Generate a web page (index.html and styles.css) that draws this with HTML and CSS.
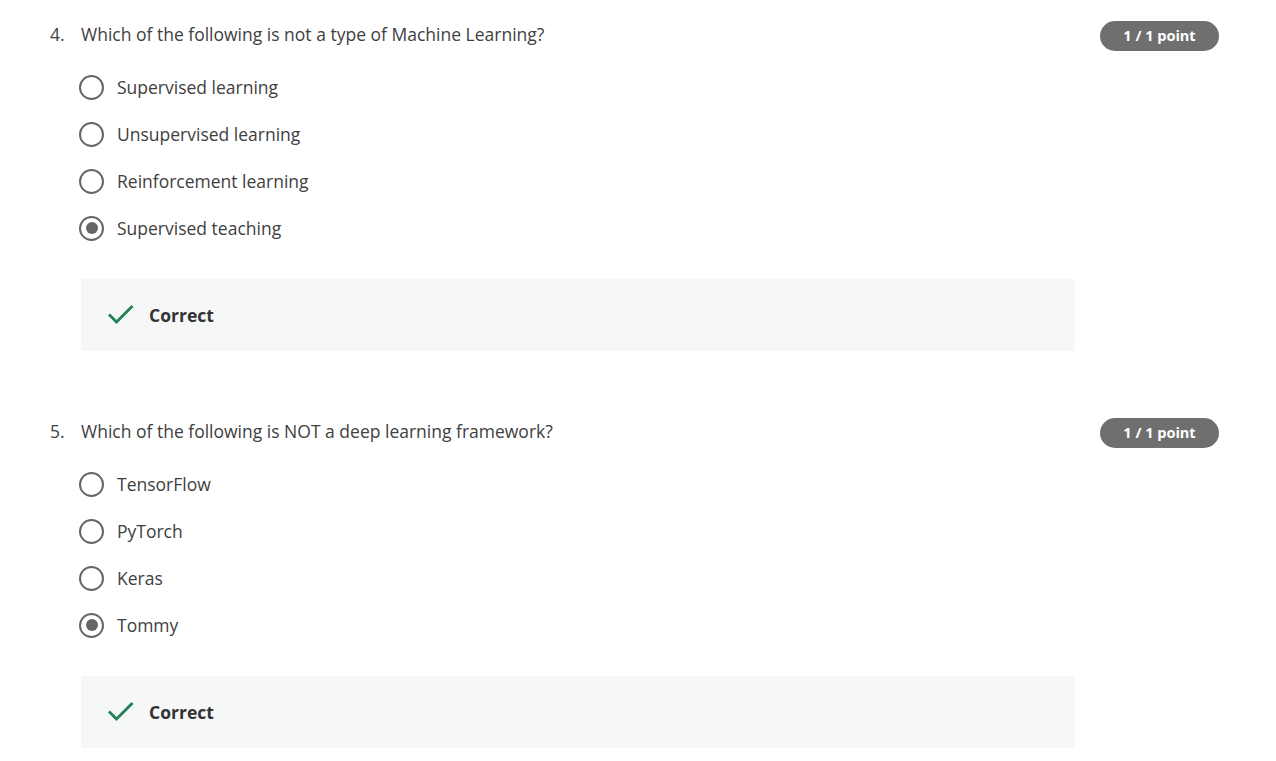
FILE: index.html
```html
<!DOCTYPE html>
<html>
<head>
<meta charset="utf-8">
<link rel="stylesheet" href="styles.css">
</head>
<body>
<div class="page">
  <section class="question">
    <div class="q-head">
      <span class="q-num">4.</span>
      <span class="q-text">Which of the following is not a type of Machine Learning?</span>
      <span class="badge">1 / 1 point</span>
    </div>
    <ul class="options">
      <li class="option"><span class="radio"></span><span>Supervised learning</span></li>
      <li class="option"><span class="radio"></span><span>Unsupervised learning</span></li>
      <li class="option"><span class="radio"></span><span>Reinforcement learning</span></li>
      <li class="option"><span class="radio checked"></span><span>Supervised teaching</span></li>
    </ul>
    <div class="feedback">
      <svg class="check" width="28" height="24" viewBox="0 0 28 24"><path d="M2 12.5 L9.5 20 L25.5 4" fill="none" stroke="#1f8354" stroke-width="2.8"/></svg>
      <span class="fb-text">Correct</span>
    </div>
  </section>
  <section class="question">
    <div class="q-head">
      <span class="q-num">5.</span>
      <span class="q-text">Which of the following is NOT a deep learning framework?</span>
      <span class="badge">1 / 1 point</span>
    </div>
    <ul class="options">
      <li class="option"><span class="radio"></span><span>TensorFlow</span></li>
      <li class="option"><span class="radio"></span><span>PyTorch</span></li>
      <li class="option"><span class="radio"></span><span>Keras</span></li>
      <li class="option"><span class="radio checked"></span><span>Tommy</span></li>
    </ul>
    <div class="feedback">
      <svg class="check" width="28" height="24" viewBox="0 0 28 24"><path d="M2 12.5 L9.5 20 L25.5 4" fill="none" stroke="#1f8354" stroke-width="2.8"/></svg>
      <span class="fb-text">Correct</span>
    </div>
  </section>
</div>
</body>
</html>
```

FILE: styles.css
```css
html, body {
  margin: 0;
  padding: 0;
  background: #ffffff;
}
body {
  font-family: "Open Sans", "Liberation Sans", sans-serif;
  color: #404040;
}
.page {
  padding: 19px 57px 0 50px;
}
.question {
  margin-bottom: 65px;
}
.question:last-child {
  margin-bottom: 0;
}
.q-head {
  display: flex;
  align-items: center;
  height: 30px;
  font-size: 17.5px;
}
.q-num {
  width: 31px;
}
.q-text {
  flex: 1;
}
.badge {
  background: #6f6f6f;
  color: #ffffff;
  font-size: 14.5px;
  font-weight: 700;
  height: 30px;
  width: 119px;
  border-radius: 15px;
  display: flex;
  align-items: center;
  justify-content: center;
  margin-top: 3px;
}
.options {
  list-style: none;
  margin: 25px 0 0 29px;
  padding: 0;
  display: flex;
  flex-direction: column;
  gap: 21px;
}
.option {
  display: flex;
  align-items: center;
  height: 26px;
  font-size: 17.5px;
}
.radio {
  box-sizing: border-box;
  width: 25px;
  height: 25px;
  border: 2.5px solid #666666;
  border-radius: 50%;
  margin-right: 13px;
  display: flex;
  align-items: center;
  justify-content: center;
}
.radio.checked::after {
  content: "";
  width: 12px;
  height: 12px;
  border-radius: 50%;
  background: #666666;
}
.feedback {
  margin: 38px 0 0 31px;
  width: 994px;
  height: 72px;
  background: #f5f8f7;
  display: flex;
  align-items: center;
  padding-left: 26px;
  box-sizing: border-box;
}
.check {
  margin-right: 14px;
  margin-top: -2px;
}
.fb-text {
  font-size: 17.5px;
  font-weight: 700;
  color: #333333;
}
```
